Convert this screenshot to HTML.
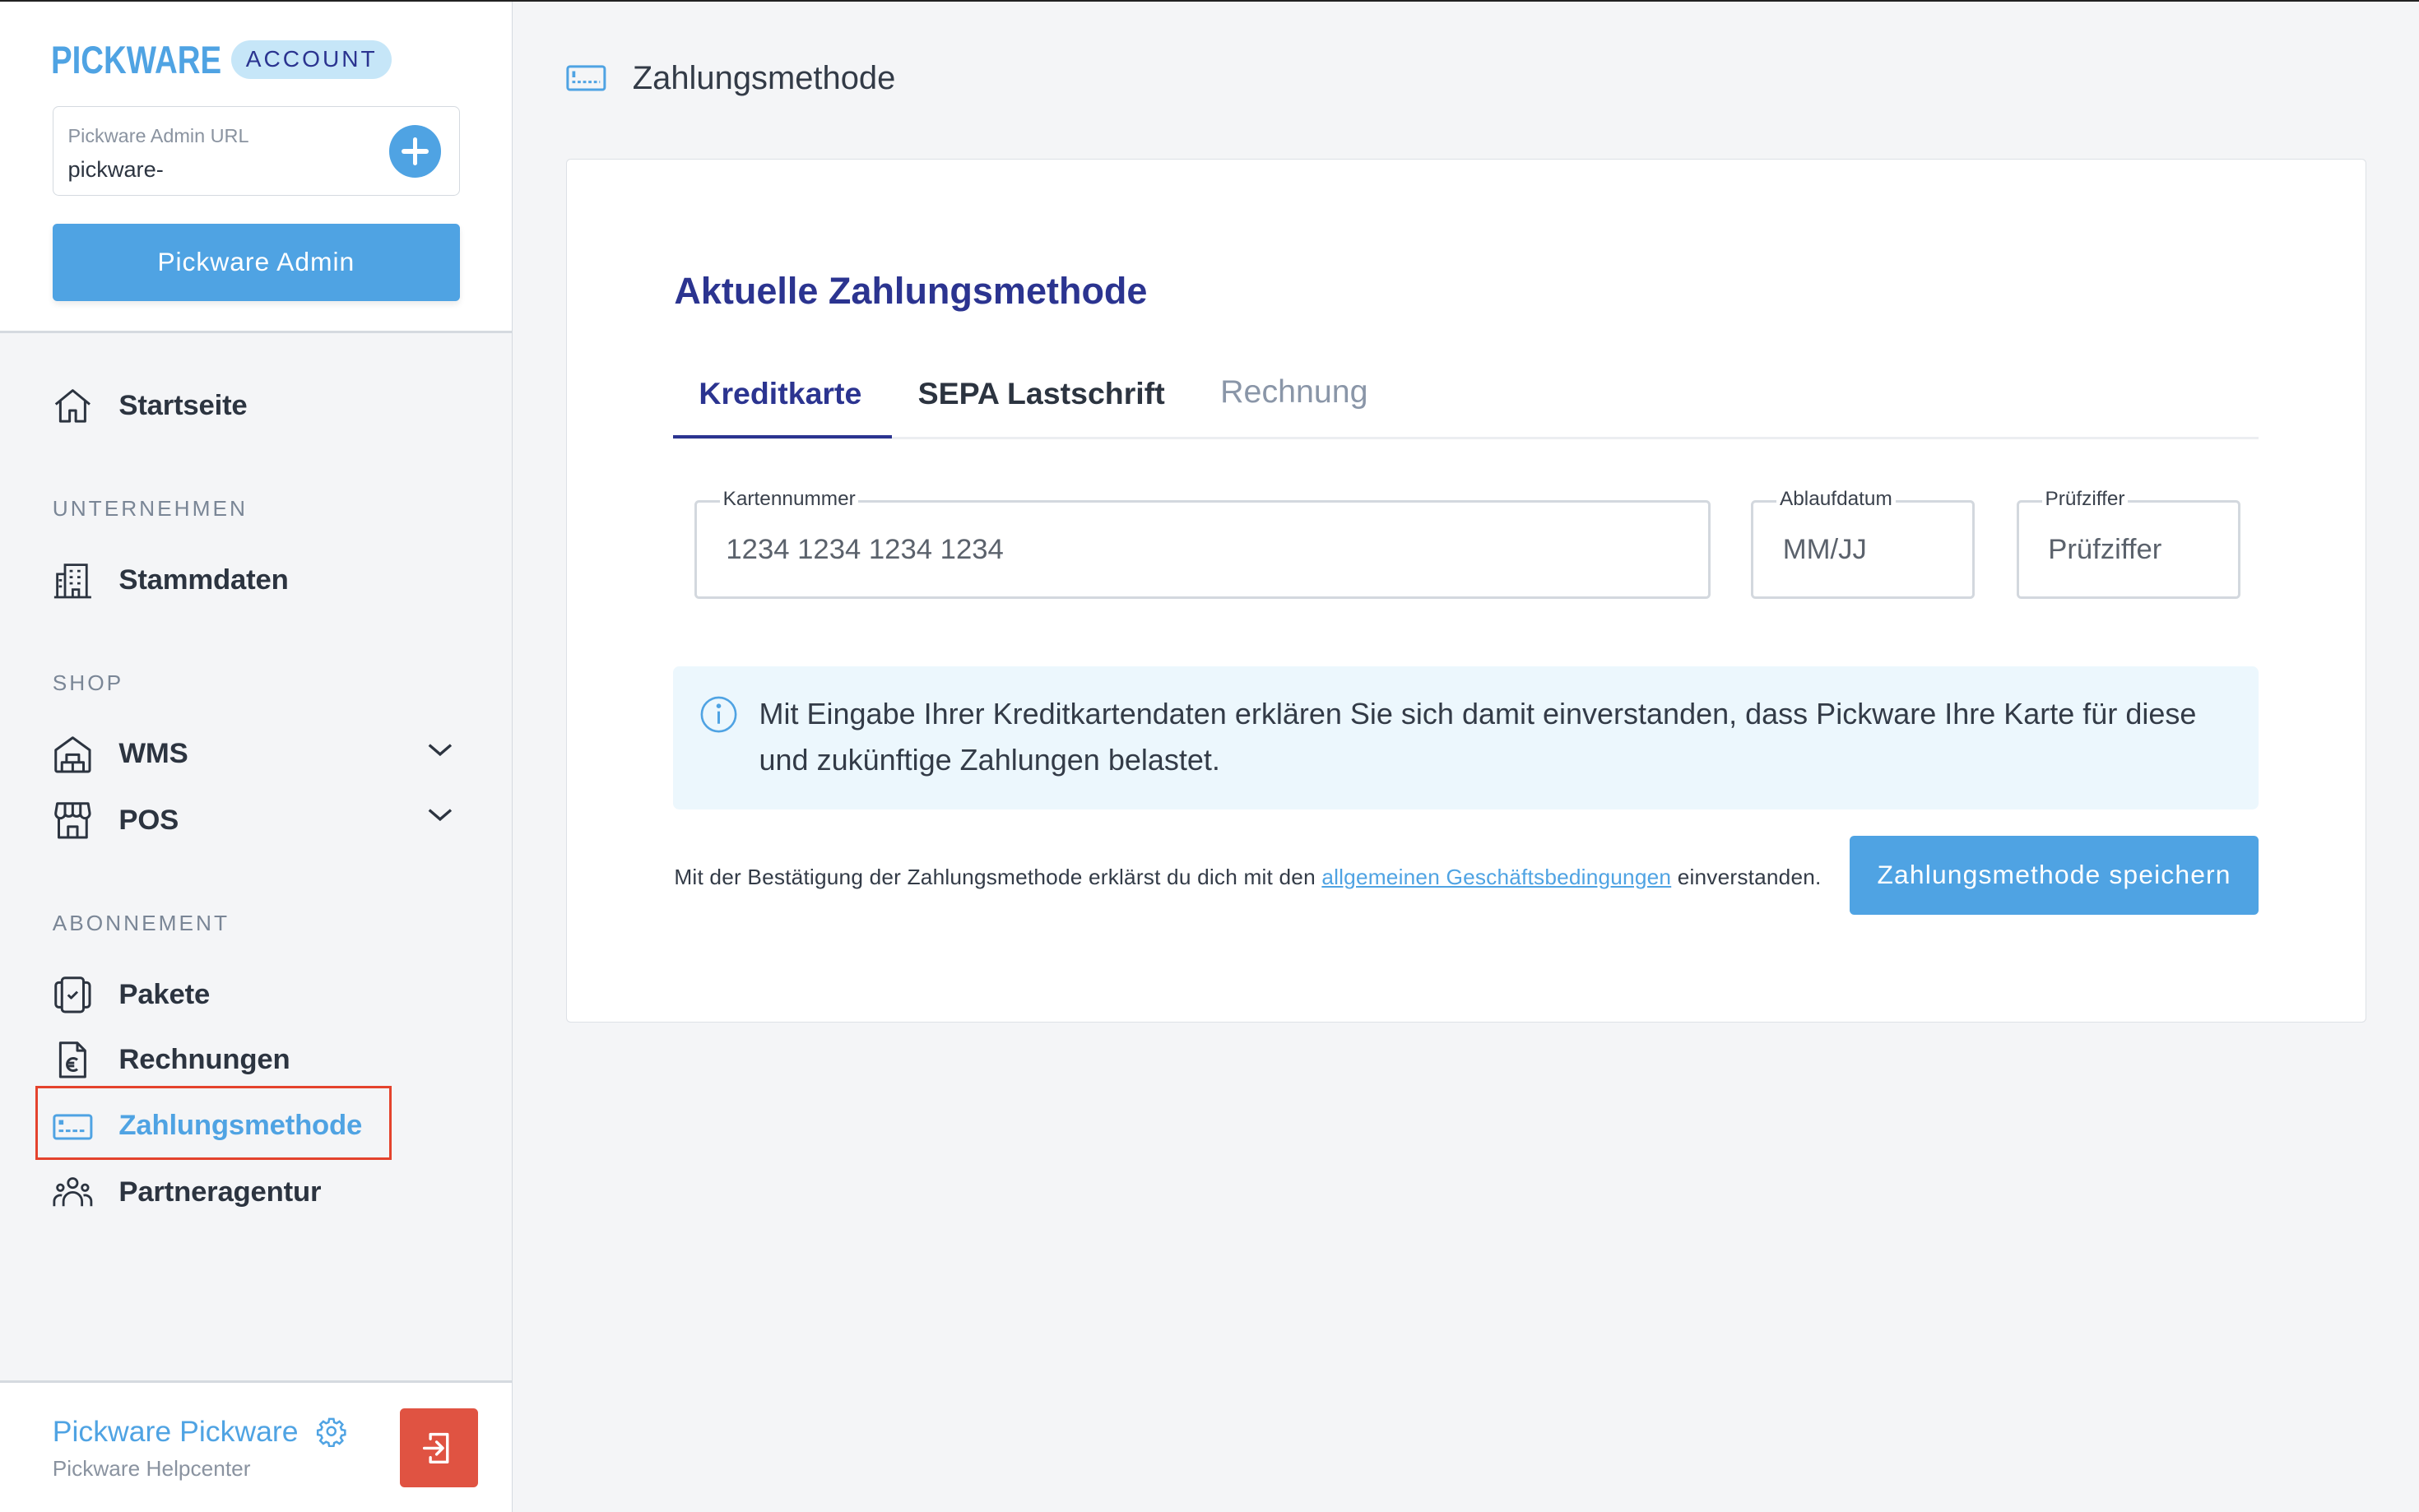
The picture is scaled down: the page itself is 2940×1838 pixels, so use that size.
<!DOCTYPE html>
<html><head><meta charset="utf-8"><style>
*{margin:0;padding:0;box-sizing:border-box}
html,body{width:2940px;height:1838px;overflow:hidden;background:#f4f5f7}
#w{zoom:1.875;width:1568px;height:981px;position:relative;font-family:"Liberation Sans",Arial,sans-serif;color:#2c3440;background:#f4f5f7}
.a{position:absolute;white-space:nowrap}
.nav{font-size:18.5px;font-weight:bold;color:#2c3440;height:24px;line-height:24px;letter-spacing:-0.1px}
.sec{font-size:14px;letter-spacing:1.6px;color:#7a8696;height:18px;line-height:18px}
.ic{position:absolute;left:34px;width:26px;height:26px}
svg{display:block}
.inp{position:absolute;border:2px solid #d3d8de;border-radius:3px;top:324px;height:64px}
.lbl{position:absolute;top:-10px;font-size:13px;background:#fff;padding:0 2px;line-height:16px;color:#3a414c}
.ph{position:absolute;top:20px;font-size:18.5px;color:#5b626c;line-height:22px}
</style></head><body><div id="w">
<div class="a" style="left:0;top:0;width:1568px;height:1px;background:#222"></div>
<div class="a" style="left:0;top:1px;width:332px;height:980px;background:#f4f5f7;border-right:1px solid #d5dae0"></div>
<div class="a" style="left:0;top:1px;width:332px;height:215px;background:#fff;border-right:1px solid #d5dae0;border-bottom:2px solid #d5dae0"></div>
<div class="a" style="left:33px;top:25px;font-size:25px;font-weight:bold;color:#4fa3e3;line-height:28px;transform:scaleX(0.82);transform-origin:left">PICKWARE</div>
<div class="a" style="left:150px;top:26px;width:104px;height:25px;border-radius:13px;background:#c6e6f8;color:#2b3490;font-size:15px;letter-spacing:1.6px;line-height:25px;text-align:center">ACCOUNT</div>
<div class="a" style="left:34px;top:69px;width:264px;height:58px;border:1px solid #d5dae0;border-radius:4px;background:#fff"></div>
<div class="a" style="left:44px;top:80px;font-size:12.5px;color:#8a93a0;line-height:16px">Pickware Admin URL</div>
<div class="a" style="left:44px;top:101px;font-size:14.5px;color:#2c3440;line-height:18px">pickware-</div>
<div class="a" style="left:252px;top:81px;width:34px;height:34px;border-radius:50%;background:#4fa3e3"></div>
<div class="a" style="left:260px;top:96.5px;width:18px;height:3px;background:#fff;border-radius:2px"></div>
<div class="a" style="left:267.5px;top:89px;width:3px;height:18px;background:#fff;border-radius:2px"></div>
<div class="a" style="left:34px;top:145px;width:264px;height:50px;background:#4fa3e3;border-radius:3px;color:#fff;font-size:17px;letter-spacing:0.5px;line-height:50px;text-align:center;box-shadow:0 2px 4px rgba(0,0,0,.08)">Pickware Admin</div>

<svg class="ic" style="top:250px" viewBox="0 0 26 26" fill="none" stroke="#2c3440" stroke-width="1.6" stroke-linejoin="round"><path d="M2 12L13 3l11 9M5 10v13h6v-7h4v7h6V10"/></svg>
<div class="a nav" style="left:77px;top:251px">Startseite</div>
<div class="a sec" style="left:34px;top:321px">UNTERNEHMEN</div>
<svg class="ic" style="top:363px" viewBox="0 0 26 26" fill="none" stroke="#2c3440" stroke-width="1.5"><path d="M3 24V9h5M8 24V3h14v21M1 24h24M11 7h2M16 7h2M11 11h2M16 11h2M11 15h2M16 15h2M13 24v-5h4v5M4 13h2M4 17h2"/></svg>
<div class="a nav" style="left:77px;top:364px">Stammdaten</div>
<div class="a sec" style="left:34px;top:434px">SHOP</div>
<svg class="ic" style="top:476px" viewBox="0 0 26 26" fill="none" stroke="#2c3440" stroke-width="1.6" stroke-linejoin="round"><path d="M2 10L13 2l11 8v13a1 1 0 0 1-1 1H3a1 1 0 0 1-1-1z"/><path d="M6 24v-6h14v6M13 18v6M9 18v-5h8v5"/></svg>
<div class="a nav" style="left:77px;top:477px">WMS</div>
<svg class="a" style="left:276px;top:480px" width="18" height="12" viewBox="0 0 18 12" fill="none" stroke="#2c3440" stroke-width="1.8"><path d="M2 3l7 6 7-6"/></svg>
<svg class="ic" style="top:519px" viewBox="0 0 26 26" fill="none" stroke="#2c3440" stroke-width="1.6" stroke-linejoin="round"><path d="M3 2h20l1 6a3 3 0 0 1-6 1 3 3 0 0 1-5 0 3 3 0 0 1-5 0 3 3 0 0 1-6-1z M8 2v7M13 2v7M18 2v7"/><path d="M4 11v13h18V11M10 24v-7h6v7"/></svg>
<div class="a nav" style="left:77px;top:520px">POS</div>
<svg class="a" style="left:276px;top:522px" width="18" height="12" viewBox="0 0 18 12" fill="none" stroke="#2c3440" stroke-width="1.8"><path d="M2 3l7 6 7-6"/></svg>
<div class="a sec" style="left:34px;top:590px">ABONNEMENT</div>
<svg class="ic" style="top:632px" viewBox="0 0 26 26" fill="none" stroke="#2c3440" stroke-width="1.6" stroke-linejoin="round"><rect x="6" y="2" width="14" height="22" rx="2"/><path d="M6 5H4a2 2 0 0 0-2 2v12a2 2 0 0 0 2 2h2M20 5h2a2 2 0 0 1 2 2v12a2 2 0 0 1-2 2h-2M10 13l2 2 4-4"/></svg>
<div class="a nav" style="left:77px;top:633px">Pakete</div>
<svg class="ic" style="top:674px" viewBox="0 0 26 26" fill="none" stroke="#2c3440" stroke-width="1.6" stroke-linejoin="round"><path d="M5 2h11l5 5v17H5z M16 2v5h5"/><path d="M16 13a4 4 0 1 0 0 6M9 15h5M9 17h5"/></svg>
<div class="a nav" style="left:77px;top:675px">Rechnungen</div>
<div class="a" style="left:23px;top:704px;width:231px;height:48px;border:2px solid #e4432d"></div>
<svg class="a" style="left:34px;top:722px" width="26" height="17" viewBox="0 0 26 17" fill="none" stroke="#4fa3e3" stroke-width="1.6"><rect x="1" y="1" width="24" height="15" rx="1.5"/><rect x="4" y="4" width="3" height="3" fill="#4fa3e3" stroke="none"/><path d="M4 11h18" stroke-dasharray="3 1.5"/></svg>
<div class="a nav" style="left:77px;top:718px;color:#4fa3e3">Zahlungsmethode</div>
<svg class="ic" style="top:760px" viewBox="0 0 26 26" fill="none" stroke="#2c3440" stroke-width="1.5"><circle cx="13" cy="7" r="3"/><circle cx="5" cy="10" r="2"/><circle cx="21" cy="10" r="2"/><path d="M7 22v-3a6 6 0 0 1 12 0v3M1 22v-3a4 4 0 0 1 5-4M25 22v-3a4 4 0 0 0-5-4"/></svg>
<div class="a nav" style="left:77px;top:761px">Partneragentur</div>

<div class="a" style="left:0;top:895px;width:332px;height:86px;background:#fff;border-top:2px solid #d5dae0;border-right:1px solid #d5dae0"></div>
<div class="a" style="left:34px;top:916px;font-size:19px;color:#4fa3e3;line-height:24px;font-weight:500">Pickware Pickware</div>
<svg class="a" style="left:205px;top:918px" width="20" height="20" viewBox="0 0 24 24" fill="none" stroke="#4fa3e3" stroke-width="1.6"><circle cx="12" cy="12" r="3.2"/><path d="M10.3 2.5h3.4l.5 2.6 1.9.8 2.2-1.5 2.4 2.4-1.5 2.2.8 1.9 2.6.5v3.4l-2.6.5-.8 1.9 1.5 2.2-2.4 2.4-2.2-1.5-1.9.8-.5 2.6h-3.4l-.5-2.6-1.9-.8-2.2 1.5-2.4-2.4 1.5-2.2-.8-1.9-2.6-.5v-3.4l2.6-.5.8-1.9-1.5-2.2 2.4-2.4 2.2 1.5 1.9-.8z"/></svg>
<div class="a" style="left:34px;top:944px;font-size:14px;color:#8a93a0;line-height:17px">Pickware Helpcenter</div>
<div class="a" style="left:259px;top:913px;width:51px;height:51px;background:#e05342;border-radius:3px"></div>
<svg class="a" style="left:272px;top:926px" width="26" height="26" viewBox="0 0 26 26" fill="none" stroke="#fff" stroke-width="1.8" stroke-linecap="round" stroke-linejoin="round"><path d="M7 7V4h11v18H7v-3M3 13h11M11 9l4 4-4 4"/></svg>

<svg class="a" style="left:367px;top:42px" width="26" height="17" viewBox="0 0 26 17" fill="none" stroke="#4fa3e3" stroke-width="1.6"><rect x="1" y="1" width="24" height="15" rx="1.5"/><rect x="4" y="4" width="2" height="4" fill="#4fa3e3" stroke="none"/><path d="M4 11h18" stroke-dasharray="2 1.5"/></svg>
<div class="a" style="left:410px;top:38px;font-size:21.3px;color:#333b47;line-height:26px">Zahlungsmethode</div>
<div class="a" style="left:367px;top:103px;width:1167px;height:560px;background:#fff;border:1px solid #dde1e6;border-radius:3px"></div>
<div class="a" style="left:437px;top:174px;font-size:24px;font-weight:bold;color:#2b3490;line-height:30px">Aktuelle Zahlungsmethode</div>
<div class="a" style="left:436px;top:283px;width:1028px;height:2px;background:#eceef1"></div>
<div class="a" style="left:436px;top:282px;width:142px;height:2px;background:#2b3490"></div>
<div class="a" style="left:453px;top:242px;font-size:20px;color:#2b3490;line-height:26px;font-weight:bold">Kreditkarte</div>
<div class="a" style="left:595px;top:242px;font-size:20px;color:#2c3440;line-height:26px;font-weight:bold">SEPA Lastschrift</div>
<div class="a" style="left:791px;top:241px;font-size:21px;color:#8a96a8;line-height:26px">Rechnung</div>

<div class="inp" style="left:450px;width:659px"><span class="lbl" style="left:15px">Kartennummer</span><span class="ph" style="left:19px">1234 1234 1234 1234</span></div>
<div class="inp" style="left:1135px;width:145px"><span class="lbl" style="left:15px">Ablaufdatum</span><span class="ph" style="left:19px">MM/JJ</span></div>
<div class="inp" style="left:1307px;width:145px"><span class="lbl" style="left:15px">Prüfziffer</span><span class="ph" style="left:19px">Prüfziffer</span></div>

<div class="a" style="left:436px;top:432px;width:1028px;height:93px;background:#ecf7fd;border-radius:4px"></div>
<svg class="a" style="left:454px;top:451px" width="24" height="24" viewBox="0 0 24 24" fill="none" stroke="#4fa3e3" stroke-width="1.4"><circle cx="12" cy="12" r="11"/><path d="M12 10v8" stroke-width="1.6"/><circle cx="12" cy="6.5" r="0.8" fill="#4fa3e3"/></svg>
<div class="a" style="left:492px;top:448px;font-size:19.2px;color:#333b47;line-height:30px;white-space:normal;width:955px">Mit Eingabe Ihrer Kreditkartendaten erklären Sie sich damit einverstanden, dass Pickware Ihre Karte für diese und zukünftige Zahlungen belastet.</div>

<div class="a" style="left:437px;top:560px;font-size:14px;color:#333b47;line-height:18px;letter-spacing:0.1px">Mit der Bestätigung der Zahlungsmethode erklärst du dich mit den <span style="color:#4fa3e3;text-decoration:underline">allgemeinen Geschäftsbedingungen</span> einverstanden.</div>
<div class="a" style="left:1199px;top:542px;width:265px;height:51px;background:#4fa3e3;border-radius:3px;color:#fff;font-size:17px;letter-spacing:0.6px;line-height:51px;text-align:center;font-weight:500">Zahlungsmethode speichern</div>
</div></body></html>
